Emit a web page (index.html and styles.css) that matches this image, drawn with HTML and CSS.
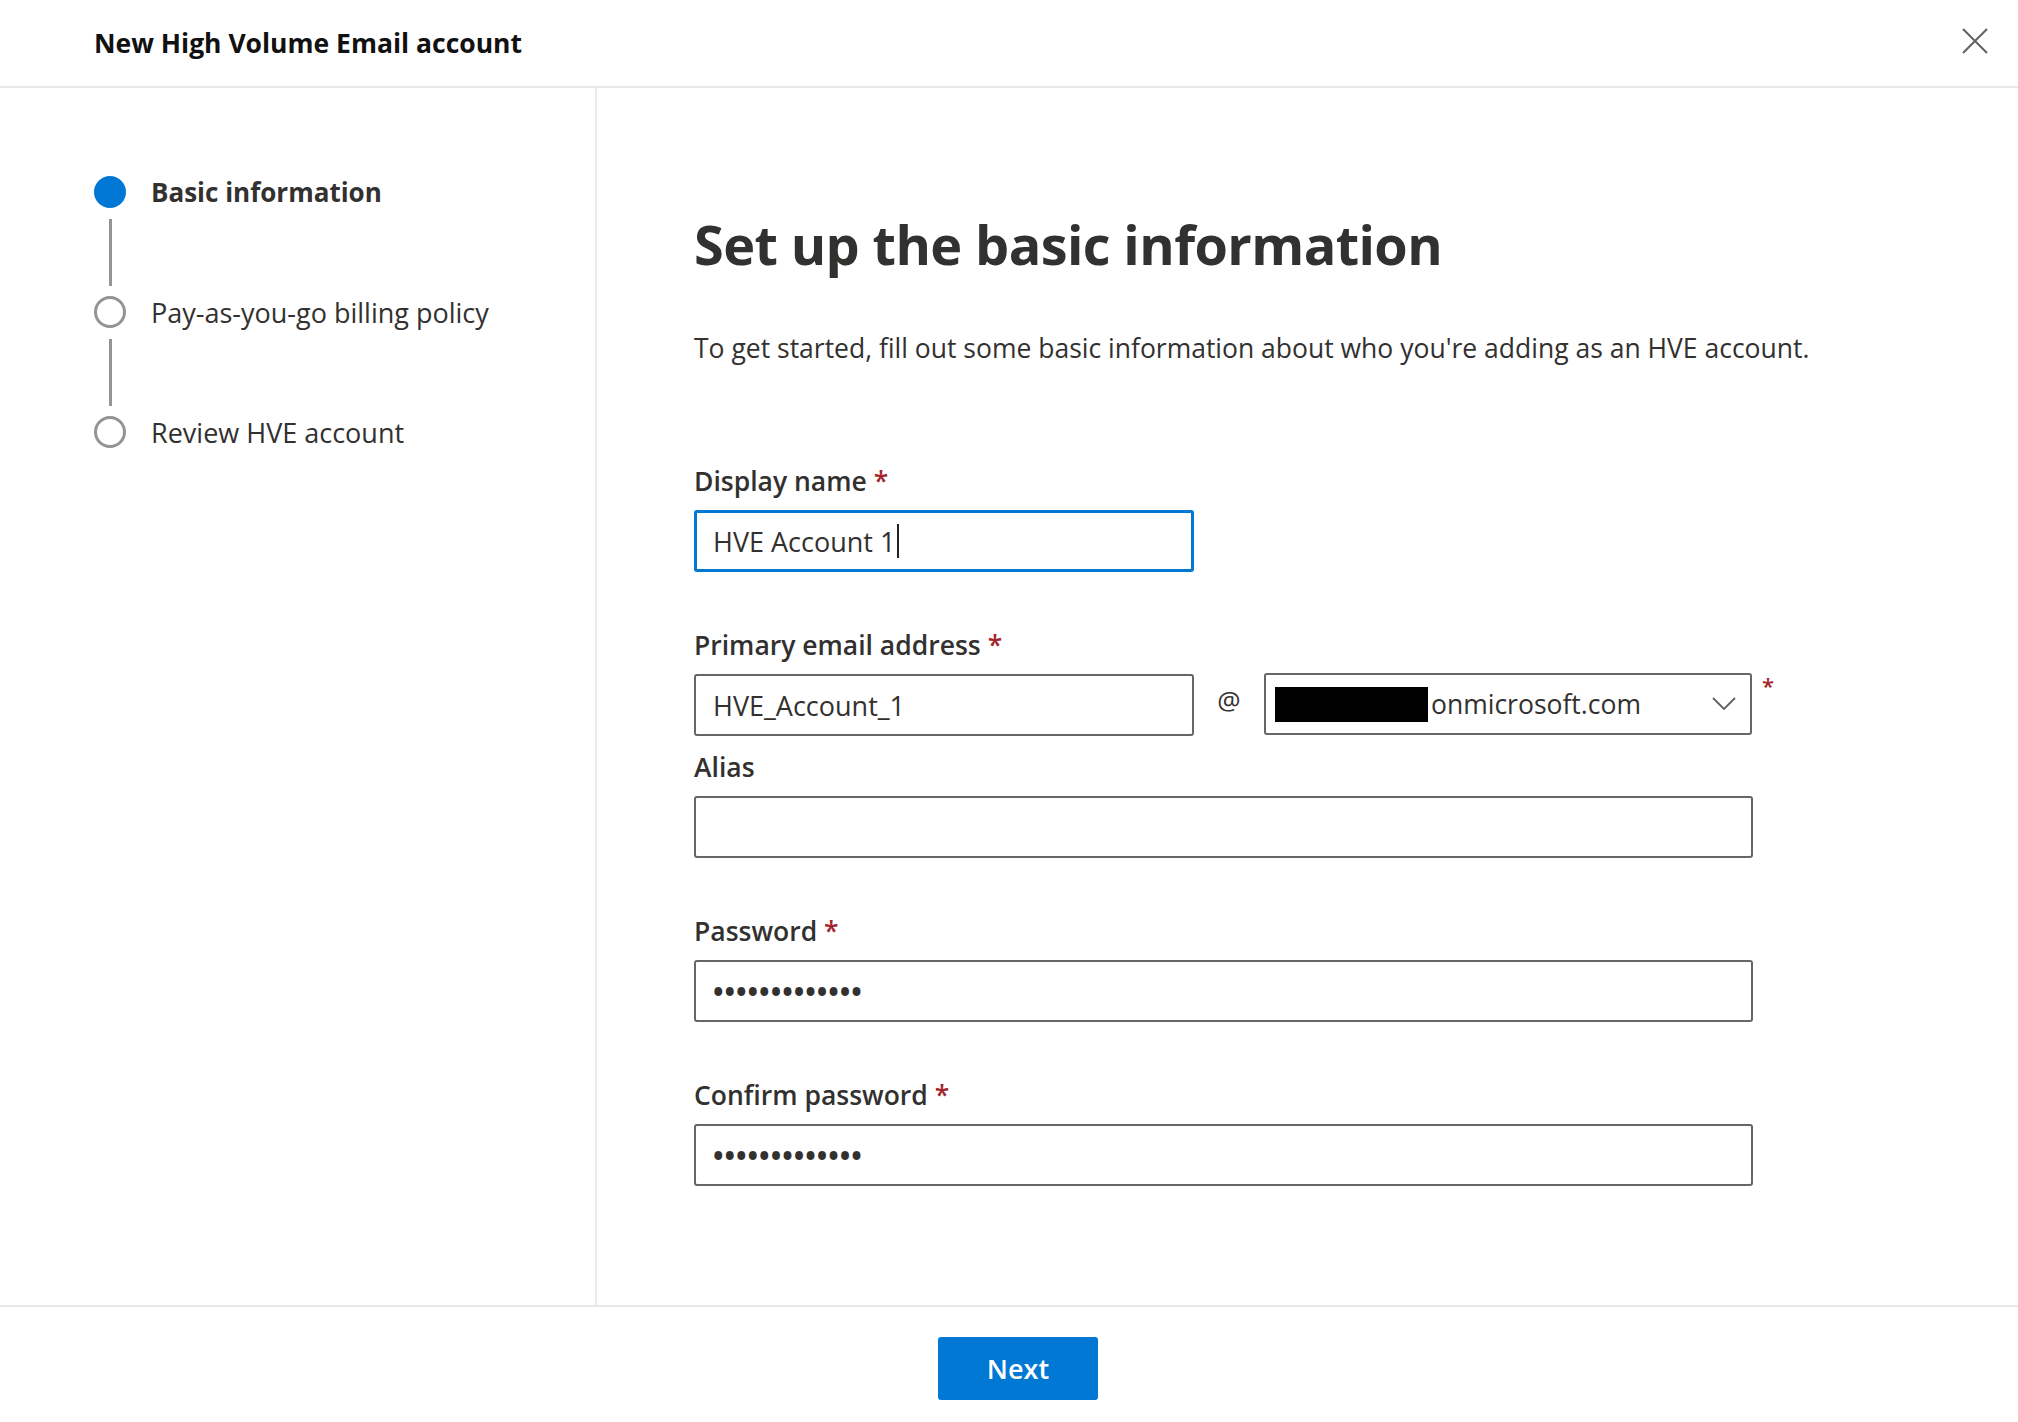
FILE: index.html
```html
<!DOCTYPE html>
<html lang="en">
<head>
<meta charset="utf-8">
<title>New High Volume Email account</title>
<link rel="stylesheet" href="styles.css">
</head>
<body>
<div class="panel">
  <header class="header">
    <h1 class="title">New High Volume Email account</h1>
    <button class="close" aria-label="Close">
      <svg width="26" height="26" viewBox="0 0 26 26"><path d="M1 1 L25 25 M25 1 L1 25" stroke="#616161" stroke-width="2" fill="none"/></svg>
    </button>
  </header>
  <div class="main">
    <nav class="steps">
      <div class="step active"><span class="dot"></span><span class="step-label">Basic information</span></div>
      <div class="connector"><span class="line"></span></div>
      <div class="step"><span class="dot"></span><span class="step-label">Pay-as-you-go billing policy</span></div>
      <div class="connector"><span class="line"></span></div>
      <div class="step"><span class="dot"></span><span class="step-label">Review HVE account</span></div>
    </nav>
    <section class="content">
      <h2 class="heading">Set up the basic information</h2>
      <p class="desc">To get started, fill out some basic information about who you're adding as an HVE account.</p>

      <div class="field first">
        <div class="label">Display name <span class="req">*</span></div>
        <div class="input short focused"><span class="val">HVE Account 1</span><span class="caret"></span></div>
      </div>

      <div class="field">
        <div class="label">Primary email address <span class="req">*</span></div>
        <div class="email-row">
          <div class="input short"><span class="val">HVE_Account_1</span></div>
          <span class="at">@</span>
          <div class="input select">
            <span class="redact"></span><span class="val domain">onmicrosoft.com</span>
            <svg class="chev" width="24" height="14" viewBox="0 0 24 14"><path d="M1 1 L12 12 L23 1" stroke="#616161" stroke-width="1.8" fill="none"/></svg>
          </div>
          <span class="req side">*</span>
        </div>
      </div>

      <div class="field alias">
        <div class="label">Alias</div>
        <div class="input wide"></div>
      </div>

      <div class="field">
        <div class="label">Password <span class="req">*</span></div>
        <div class="input wide"><span class="val dots">•••••••••••••</span></div>
      </div>

      <div class="field">
        <div class="label">Confirm password <span class="req">*</span></div>
        <div class="input wide"><span class="val dots">•••••••••••••</span></div>
      </div>
    </section>
  </div>
  <footer class="footer">
    <button class="next">Next</button>
  </footer>
</div>
</body>
</html>
```
FILE: styles.css
```css
* { box-sizing: border-box; }
html, body { margin: 0; padding: 0; background: #fff; }
body {
  font-family: "Open Sans", "Noto Sans", sans-serif;
  color: #323130;
  width: 2018px;
  height: 1422px;
  overflow: hidden;
}
.panel { display: flex; flex-direction: column; height: 1422px; }

.header {
  height: 88px;
  flex: none;
  border-bottom: 2px solid #e8e8e8;
  display: flex;
  align-items: center;
  justify-content: space-between;
  padding: 0 30px 0 94px;
}
.title {
  margin: 0;
  font-size: 26.5px;
  font-weight: 700;
  color: #111;
}
.close {
  border: 0; background: none; padding: 0; width: 26px; height: 26px;
  margin-top: -4px;
}

.main { flex: 1; display: flex; min-height: 0; overflow: hidden; }

.steps {
  width: 597px;
  flex: none;
  border-right: 2px solid #ebebeb;
  padding: 88px 0 0 94px;
  display: flex;
  flex-direction: column;
}
.step { display: flex; align-items: center; height: 32px; }
.dot {
  width: 32px; height: 32px; border-radius: 50%;
  border: 3px solid #949494;
  flex: none;
  margin-right: 25px;
}
.step.active .dot { background: #0078d4; border-color: #0078d4; }
.step-label { font-size: 27px; color: #323130; white-space: nowrap; }
.step.active .step-label { font-weight: 700; font-size: 26px; }
.connector { height: 88px; padding: 11px 0 10px 14.5px; display: flex; }
.line { width: 3px; background: #949494; }

.content { flex: 1; padding: 0 0 0 97px; }
.heading {
  margin: 120px 0 0;
  font-size: 54px;
  font-weight: 700;
  line-height: 72px;
  letter-spacing: -0.6px;
  color: #323130;
}
.desc {
  margin: 50px 0 0;
  font-size: 26.5px;
  line-height: 36px;
}

.field { margin-top: 55px; }
.field.first { margin-top: 97px; }
.field.alias { margin-top: 13px; }
.label {
  font-size: 26.5px;
  font-weight: 600;
  line-height: 36px;
  margin-bottom: 11px;
}
.req { color: #a4262c; font-weight: 600; }

.input {
  height: 62px;
  border: 2px solid #666;
  border-radius: 3px;
  display: flex;
  align-items: center;
  padding: 0 17px;
  font-size: 27px;
  color: #323130;
}
.input.short { width: 500px; }
.input.wide { width: 1059px; }
.input.focused { border: 3px solid #0078d4; padding: 0 16px; }
.caret { display: inline-block; width: 2px; height: 34px; background: #222; margin-left: 2px; }
.dots { font-size: 28px; letter-spacing: 1px; font-weight: 700; }

.email-row { display: flex; align-items: flex-start; }
.at { width: 70px; text-align: center; font-size: 26px; line-height: 36px; padding-top: 8px; }
.input.select { width: 488px; padding: 0 14px 0 9px; margin-top: -1px; font-size: 26.5px; }
.redact { width: 153px; height: 35px; background: #000; flex: none; }
.domain { margin-left: 3px; flex: 1; }
.chev { flex: none; }
.req.side { margin-left: 10px; font-size: 22px; line-height: 22px; }

.footer {
  height: 117px;
  flex: none;
  border-top: 2px solid #e8e8e8;
  display: flex;
  justify-content: center;
  padding: 30px 0 0 18px;
}
.next {
  width: 160px;
  height: 63px;
  border: 0;
  border-radius: 3px;
  background: #0078d4;
  color: #fff;
  font-family: "Open Sans", sans-serif;
  font-size: 27px;
  font-weight: 600;
}
```
